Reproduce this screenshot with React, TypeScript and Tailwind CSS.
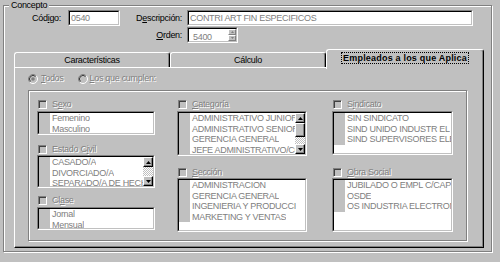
import React from "react";

const dis = "text-[#808080] [text-shadow:1px_1px_0_#ffffff]";

function Acc({ text, i }: { text: string; i?: number }) {
  if (i === undefined) return <>{text}</>;
  return (
    <>
      {text.slice(0, i)}
      <span className="underline underline-offset-[1px]">{text[i]}</span>
      {text.slice(i + 1)}
    </>
  );
}

function Checkbox() {
  return (
    <div className="w-[9px] h-[9px] shrink-0 border border-t-[#808080] border-l-[#808080] border-b-white border-r-white bg-[#c0c0c0] shadow-[inset_1px_1px_0_#404040]" />
  );
}

function CheckLabel({ text, u }: { text: string; u?: number }) {
  return (
    <div className="flex items-center h-[10px]">
      <div className="ml-[1px]">
        <Checkbox />
      </div>
      <span className={`ml-[5px] leading-[10px] ${dis}`}>
        <Acc text={text} i={u} />
      </span>
    </div>
  );
}

function Arrow({ dir }: { dir: "up" | "down" }) {
  return (
    <div className="w-[10px] h-[10px] shrink-0 bg-[#c0c0c0] border border-t-white border-l-white border-r-black border-b-black shadow-[inset_-1px_-1px_0_#808080] flex items-center justify-center">
      <svg width="5" height="3" viewBox="0 0 5 3">
        {dir === "up" ? (
          <path d="M2.5 0 L5 3 L0 3 Z" fill="#000" />
        ) : (
          <path d="M0 0 L5 0 L2.5 3 Z" fill="#000" />
        )}
      </svg>
    </div>
  );
}

function Scrollbar({ thumb }: { thumb: boolean }) {
  return (
    <div className="w-[10px] h-full flex flex-col shrink-0">
      <Arrow dir="up" />
      {thumb ? (
        <div className="h-[14px] shrink-0 bg-[#c0c0c0] border border-t-white border-l-white border-r-black border-b-black shadow-[inset_-1px_-1px_0_#808080]" />
      ) : null}
      <div className="flex-1 bg-[repeating-conic-gradient(#ffffff_0_25%,#c0c0c0_0_50%)] bg-[length:2px_2px]" />
      <Arrow dir="down" />
    </div>
  );
}

function ListBox({
  items,
  h,
  scroll,
}: {
  items: string[];
  h: string;
  scroll?: React.ReactNode;
}) {
  return (
    <div
      className={`${h} w-full border border-t-[#808080] border-l-[#808080] border-b-white border-r-white`}
    >
      <div className="h-full border border-t-black border-l-black border-b-[#c0c0c0] border-r-[#c0c0c0] bg-white flex overflow-hidden">
        <div className="flex-1 min-w-0 flex flex-col overflow-hidden">
          {items.map((t) => (
            <div key={t} className="flex h-[10.5px] shrink-0">
              <div className="w-[11px] shrink-0 bg-[#c0c0c0]" />
              <div className="pl-[2px] text-[#808080] whitespace-nowrap overflow-hidden leading-[10px]">
                {t}
              </div>
            </div>
          ))}
        </div>
        {scroll}
      </div>
    </div>
  );
}

function Field({
  w,
  children,
  extra,
}: {
  w: string;
  children: React.ReactNode;
  extra?: React.ReactNode;
}) {
  return (
    <div
      className={`${w} h-[16px] border border-t-[#808080] border-l-[#808080] border-b-white border-r-white`}
    >
      <div className="h-full border border-t-black border-l-black border-b-[#c0c0c0] border-r-[#c0c0c0] bg-white flex">
        <div className="flex-1 pl-[1px] text-[#808080] leading-[12px] whitespace-nowrap overflow-hidden">
          {children}
        </div>
        {extra}
      </div>
    </div>
  );
}

function SpinBtn({ dir }: { dir: "up" | "down" }) {
  return (
    <div className="flex-1 bg-[#c0c0c0] border border-t-white border-l-white border-r-[#808080] border-b-[#808080] flex items-center justify-center">
      <svg width="3" height="2" viewBox="0 0 3 2">
        {dir === "up" ? (
          <path d="M1.5 0 L3 2 L0 2 Z" fill="#808080" />
        ) : (
          <path d="M0 0 L3 0 L1.5 2 Z" fill="#808080" />
        )}
      </svg>
    </div>
  );
}

function Radio({ checked }: { checked?: boolean }) {
  return (
    <svg width="10" height="10" viewBox="0 0 10 10" className="shrink-0">
      <circle cx="5" cy="5" r="4.5" fill="#c0c0c0" />
      <path d="M1.8 8.2 A4.5 4.5 0 0 1 8.2 1.8" stroke="#808080" strokeWidth="1" fill="none" />
      <path d="M2.5 7.5 A3.5 3.5 0 0 1 7.5 2.5" stroke="#404040" strokeWidth="1" fill="none" />
      <path d="M8.2 1.8 A4.5 4.5 0 0 1 1.8 8.2" stroke="#ffffff" strokeWidth="1" fill="none" />
      {checked ? <circle cx="5" cy="5" r="1.8" fill="#808080" /> : null}
    </svg>
  );
}

export default function App() {
  return (
    <div className="w-[500px] h-[262px] bg-[#c0c0c0] overflow-hidden text-[9px] tracking-[-0.3px] text-black font-['Liberation_Sans',Arial,sans-serif] pt-[5px] pl-[3px]">
      {/* Concepto group */}
      <div className="relative w-[489px] h-[247px] border border-[#808080] shadow-[inset_1px_1px_0_#ffffff,1px_1px_0_#ffffff]">
        <div className="absolute left-[5px] top-[-7px] px-[2px] bg-[#c0c0c0] leading-[12px]">
          Concepto
        </div>

        {/* Row 1 */}
        <div className="flex items-center mt-[4px]">
          <div className="w-[60px] text-right pr-[3px] leading-[16px]">
            <Acc text="Código:" i={3} />
          </div>
          <div className="ml-[4px]">
            <Field w="w-[52px]">0540</Field>
          </div>
          <div className="w-[67px] text-right pr-[5px] leading-[16px]">
            <Acc text="Descripción:" i={1} />
          </div>
          <Field w="w-[286px]">CONTRI ART FIN ESPECIFICOS</Field>
        </div>

        {/* Row 2 */}
        <div className="flex items-center mt-[1px]">
          <div className="w-[183px] text-right pr-[5px] leading-[16px]">
            <Acc text="Orden:" i={0} />
          </div>
          <Field
            w="w-[51px]"
            extra={
              <div className="w-[8px] flex flex-col">
                <SpinBtn dir="up" />
                <SpinBtn dir="down" />
              </div>
            }
          >
            <div className="pt-[2px] pl-[3px]">5400</div>
          </Field>
        </div>

        {/* Tab control */}
        <div className="ml-[10px] mt-[6px] w-[470px] flex flex-col">
          <div className="flex items-end h-[18px]">
            <div className="h-[15px] w-[156px] bg-[#c0c0c0] border-t border-l border-white border-r border-r-black rounded-t-[3px] shadow-[inset_-1px_0_0_#808080] flex items-center justify-center leading-[12px]">
              Características
            </div>
            <div className="h-[15px] w-[156px] bg-[#c0c0c0] border-t border-l border-white border-r border-r-black rounded-t-[3px] shadow-[inset_-1px_0_0_#808080] flex items-center justify-center leading-[12px]">
              Cálculo
            </div>
            <div className="relative z-10 -mb-[2px] h-[20px] w-[158px] bg-[#c0c0c0] border-t border-l border-white border-r border-r-black rounded-t-[3px] shadow-[inset_-1px_0_0_#808080] flex items-center justify-center pb-[3px]">
              <span className="font-bold tracking-[0.2px] border border-dotted border-black px-[1px] leading-[10px]">
                Empleados a los que Aplica
              </span>
            </div>
          </div>

          <div className="w-[470px] h-[181px] border border-t-white border-l-white border-r-black border-b-black shadow-[inset_-1px_-1px_0_#808080]">
            {/* radio row */}
            <div className="flex items-center h-[12px] mt-[5px] ml-[13px]">
              <Radio checked />
              <span className={`ml-[3px] ${dis}`}>
                <Acc text="Todos" i={0} />
              </span>
              <div className="ml-[14px]">
                <Radio />
              </div>
              <span className={`ml-[2px] ${dis}`}>
                <Acc text="Los que cumplen:" i={0} />
              </span>
            </div>

            {/* inner group */}
            <div className="ml-[13px] mt-[5px] w-[439px] h-[151px] border border-[#808080] shadow-[inset_1px_1px_0_#ffffff,1px_1px_0_#ffffff] flex pt-[8px]">
              {/* Col 1 */}
              <div className="ml-[8px] w-[118px] flex flex-col">
                <CheckLabel text="Sexo" u={1} />
                <div className="mt-[2px]">
                  <ListBox h="h-[24px]" items={["Femenino", "Masculino"]} />
                </div>
                <div className="mt-[9px]">
                  <CheckLabel text="Estado Civil" u={8} />
                </div>
                <div className="mt-[1px]">
                  <ListBox
                    h="h-[33px]"
                    items={["CASADO/A", "DIVORCIADO/A", "SEPARADO/A DE HECHO"]}
                    scroll={<Scrollbar thumb={false} />}
                  />
                </div>
                <div className="mt-[7px]">
                  <CheckLabel text="Clase" u={2} />
                </div>
                <div className="mt-[2px]">
                  <ListBox h="h-[23px]" items={["Jornal", "Mensual"]} />
                </div>
              </div>

              {/* Col 2 */}
              <div className="ml-[22px] w-[130px] flex flex-col">
                <CheckLabel text="Categoría" u={0} />
                <div className="mt-[2px]">
                  <ListBox
                    h="h-[45px]"
                    items={[
                      "ADMINISTRATIVO JUNIOR",
                      "ADMINISTRATIVO SENIOR",
                      "GERENCIA GENERAL",
                      "JEFE ADMINISTRATIVO/CONTABLE",
                    ]}
                    scroll={<Scrollbar thumb />}
                  />
                </div>
                <div className="mt-[11px]">
                  <CheckLabel text="Sección" u={0} />
                </div>
                <div className="mt-[1px]">
                  <ListBox
                    h="h-[54px]"
                    items={[
                      "ADMINISTRACION",
                      "GERENCIA GENERAL",
                      "INGENIERIA Y PRODUCCI",
                      "MARKETING Y VENTAS",
                    ]}
                  />
                </div>
              </div>

              {/* Col 3 */}
              <div className="ml-[25px] w-[121px] flex flex-col">
                <CheckLabel text="Sindicato" u={1} />
                <div className="mt-[2px]">
                  <ListBox
                    h="h-[44px]"
                    items={[
                      "SIN SINDICATO",
                      "SIND UNIDO INDUSTR EL",
                      "SIND SUPERVISORES ELEC",
                    ]}
                  />
                </div>
                <div className="mt-[12px]">
                  <CheckLabel text="Obra Social" u={0} />
                </div>
                <div className="mt-[1px]">
                  <ListBox
                    h="h-[54px]"
                    items={[
                      "JUBILADO O EMPL C/CAP",
                      "OSDE",
                      "OS INDUSTRIA ELECTRONICA",
                    ]}
                  />
                </div>
              </div>
            </div>
          </div>
        </div>
      </div>
    </div>
  );
}
